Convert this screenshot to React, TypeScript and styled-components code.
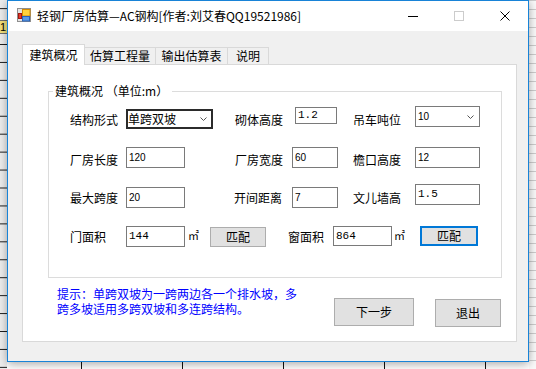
import React from "react";
import styled, { createGlobalStyle } from "styled-components";

const CJK = `"Noto Sans CJK SC", "Liberation Sans", sans-serif`;

const GlobalStyle = createGlobalStyle`
  html, body {
    margin: 0;
    padding: 0;
    background: #ffffff;
    overflow: hidden;
  }
  body {
    font-family: ${CJK};
    font-size: 12px;
    color: #000;
  }
  * {
    box-sizing: border-box;
  }
`;

const tabs = ["建筑概况", "估算工程量", "输出估算表", "说明"];
const tabWidths = [63, 72, 73, 42];

const App = () => {
  return (
    <>
      <GlobalStyle />
      <Page>
        <RowHeaders>
          <ActiveRowHeader>1</ActiveRowHeader>
        </RowHeaders>
        <Window>
          <TitleBar>
            <AppIcon width="14" height="14" viewBox="0 0 14 14">
              <rect x="0.5" y="0.5" width="13" height="13" fill="#e4e4e4" stroke="#8e8e8e" />
              <rect x="1.5" y="5.5" width="3" height="5" fill="#e23b2e" stroke="#a3170f" />
              <rect x="5.5" y="1.5" width="7.5" height="6.5" fill="#ffd23c" stroke="#d48a00" />
              <rect x="5.5" y="8.5" width="7" height="4.5" fill="#5b9be6" stroke="#2a62b8" />
            </AppIcon>
            <Caption>轻钢厂房估算—AC钢构[作者:刘艾春QQ19521986]</Caption>
            <CaptionButton>
              <svg width="10" height="10" viewBox="0 0 10 10">
                <line x1="0" y1="5.5" x2="10" y2="5.5" stroke="#000" />
              </svg>
            </CaptionButton>
            <CaptionButton>
              <svg width="10" height="10" viewBox="0 0 10 10">
                <rect x="0.5" y="0.5" width="9" height="9" fill="none" stroke="#cccccc" />
              </svg>
            </CaptionButton>
            <CaptionButton>
              <svg width="10" height="10" viewBox="0 0 10 10">
                <path d="M0.5 0.5 L9.5 9.5 M9.5 0.5 L0.5 9.5" stroke="#000" strokeWidth="1" />
              </svg>
            </CaptionButton>
          </TitleBar>

          <Body>
            <TabStrip>
              {tabs.map((t, i) => (
                <Tab key={t} $w={tabWidths[i]} $active={i === 0} $first={i === 0}>
                  {t}
                </Tab>
              ))}
            </TabStrip>
            <Panel>
              <GroupBox>
                <Legend>建筑概况 （单位:m）</Legend>
                <FieldGrid>
                  <Label $dy={6}>结构形式</Label>
                  <Combo $w={87} $h={20} $dy={3} $focus>
                    <ComboText>单跨双坡</ComboText>
                    <Chevron />
                  </Combo>
                  <Label $dy={6} $dx={2}>砌体高度</Label>
                  <TextBox $w={42} $h={17} $dy={1} $dx={3} $mono>1.2</TextBox>
                  <Label $dy={6}>吊车吨位</Label>
                  <Combo $w={65} $h={21} $dy={0}>
                    <ComboText $small>10</ComboText>
                    <Chevron />
                  </Combo>

                  <Label $dy={5}>厂房长度</Label>
                  <TextBox $w={59} $h={21}>120</TextBox>
                  <Label $dy={5} $dx={2}>厂房宽度</Label>
                  <TextBox $w={46} $h={21}>60</TextBox>
                  <Label $dy={5}>檐口高度</Label>
                  <TextBox $w={65} $h={21}>12</TextBox>

                  <Label $dy={6}>最大跨度</Label>
                  <TextBox $w={59} $h={21} $dy={3}>20</TextBox>
                  <Label $dy={6} $dx={1}>开间距离</Label>
                  <TextBox $w={46} $h={21} $dy={3}>7</TextBox>
                  <Label $dy={6}>文儿墙高</Label>
                  <TextBox $w={65} $h={21} $mono>1.5</TextBox>
                </FieldGrid>

                <AreaRow>
                  <Label $dy={3} $w={56}>门面积</Label>
                  <TextBox $w={59} $h={21} $mono>144</TextBox>
                  <Unit $ml={3}>㎡</Unit>
                  <Button $w={56} $h={20} $dy={1} $ml={10}>匹配</Button>
                  <Label $dy={3} $w={45} $ml={22}>窗面积</Label>
                  <TextBox $w={59} $h={20} $mono>864</TextBox>
                  <Unit $ml={2}>㎡</Unit>
                  <Button $w={58} $h={20} $ml={14} $focus>匹配</Button>
                </AreaRow>
              </GroupBox>

              <Footer>
                <Hint>
                  <HintLine>提示：单跨双坡为一跨两边各一个排水坡，多</HintLine>
                  <HintLine>跨多坡适用多跨双坡和多连跨结构。</HintLine>
                </Hint>
                <Actions>
                  <Button $w={80} $h={28} $dy={12}>下一步</Button>
                  <Button $w={66} $h={28} $dy={13} $ml={21}>退出</Button>
                </Actions>
              </Footer>
            </Panel>
          </Body>
        </Window>
        <RightSheet />
        <BottomSheet />
      </Page>
    </>
  );
};

const Chevron = () => (
  <svg width="7" height="4" viewBox="0 0 7 4">
    <polyline points="0.5,0.5 3.5,3.5 6.5,0.5" fill="none" stroke="#555" strokeWidth="1" />
  </svg>
);

export default App;

/**
 * page + the spreadsheet peeking out behind the dialog
 */
const Page = styled.div`
  display: grid;
  grid-template-columns: 7px 522px 7px;
  grid-template-rows: 362px 7px;
  width: 536px;
  height: 369px;
`;

const RowHeaders = styled.div`
  grid-column: 1;
  grid-row: 1 / 3;
  background-color: #eeeeee;
  background-image: linear-gradient(to bottom, #1e1e1e 0, #1e1e1e 1px, transparent 1px);
  background-size: 100% 17.95px;
  background-position: 0 44px;
  display: flex;
  flex-direction: column;
`;

const ActiveRowHeader = styled.div`
  margin-top: 20px;
  height: 14px;
  background: #f3e07a;
  border-top: 1px solid #6e6e6e;
  border-bottom: 1px solid #6e6e6e;
  font-family: "Liberation Sans", sans-serif;
  font-size: 11px;
  line-height: 12px;
  text-align: right;
  padding-right: 1px;
  overflow: hidden;
`;

const RightSheet = styled.div`
  grid-column: 3;
  grid-row: 1 / 3;
  background-color: #fafafa;
  background-image: linear-gradient(to bottom, #cdcdcd 0, #cdcdcd 1px, transparent 1px);
  background-size: 100% 9px;
  background-position: 0 9px;
`;

const BottomSheet = styled.div`
  grid-column: 2;
  grid-row: 2;
  background-color: #ffffff;
  background-image: linear-gradient(to right, #111 0, #111 1px, transparent 1px);
  background-size: 101px 100%;
  background-position: 74px 0;
`;

/**
 * the dialog window
 */
const Window = styled.div`
  grid-column: 2;
  grid-row: 1;
  position: relative;
  z-index: 1;
  display: flex;
  flex-direction: column;
  border: 1px solid #1883d7;
  background: #f0f0f0;
  box-shadow: 0 2px 9px rgba(0, 0, 0, 0.35);
`;

const TitleBar = styled.div`
  height: 30px;
  display: flex;
  align-items: center;
  background: #ffffff;
`;

const AppIcon = styled.svg`
  align-self: flex-start;
  margin: 7px 0 0 9px;
  flex-shrink: 0;
`;

const Caption = styled.div`
  flex: 1;
  margin-left: 6px;
  margin-top: -1px;
  font-size: 12px;
  line-height: 16px;
  white-space: nowrap;
`;

const CaptionButton = styled.div`
  width: 46px;
  height: 30px;
  display: flex;
  align-items: center;
  justify-content: center;
`;

const Body = styled.div`
  flex: 1;
  display: flex;
  flex-direction: column;
  padding: 13px 11px 0 14px;
`;

const TabStrip = styled.div`
  display: flex;
  align-items: flex-end;
  height: 20px;
`;

const Tab = styled.div<{ $w: number; $active?: boolean; $first?: boolean }>`
  position: relative;
  z-index: ${(p) => (p.$active ? 2 : 1)};
  width: ${(p) => p.$w}px;
  height: ${(p) => (p.$active ? 21 : 17)}px;
  margin-left: ${(p) => (p.$first ? 0 : -1)}px;
  margin-bottom: ${(p) => (p.$active ? -1 : 0)}px;
  border: 1px solid #d9d9d9;
  border-bottom: none;
  background: ${(p) => (p.$active ? "#ffffff" : "#f0f0f0")};
  display: flex;
  align-items: center;
  justify-content: center;
  font-size: 12px;
  line-height: 16px;
  white-space: nowrap;
`;

const Panel = styled.div`
  width: 495px;
  height: 278px;
  border: 1px solid #d9d9d9;
  background: #ffffff;
  padding: 26px 0 0 25px;
  display: flex;
  flex-direction: column;
`;

const GroupBox = styled.div`
  width: 454px;
  height: 187px;
  border: 1px solid #dcdcdc;
  display: flex;
  flex-direction: column;
`;

const Legend = styled.div`
  align-self: flex-start;
  margin: -9px 0 0 4px;
  padding: 0 4px 0 2px;
  background: #ffffff;
  line-height: 16px;
  white-space: pre;
`;

const FieldGrid = styled.div`
  display: grid;
  grid-template-columns: 56px 107px 59px 61px 62px 65px;
  grid-template-rows: 41px 37px 42px;
  align-items: start;
  margin-top: 7px;
  padding-left: 21px;
`;

const AreaRow = styled.div`
  display: flex;
  align-items: flex-start;
  height: 21px;
  padding-left: 21px;
`;

const Label = styled.span<{ $dy?: number; $dx?: number; $w?: number; $ml?: number }>`
  display: block;
  margin-top: ${(p) => p.$dy ?? 0}px;
  margin-left: ${(p) => p.$ml ?? 0}px;
  padding-left: ${(p) => p.$dx ?? 0}px;
  ${(p) => (p.$w ? `width: ${p.$w}px; flex-shrink: 0;` : "")}
  font-size: 12px;
  line-height: 16px;
  white-space: nowrap;
`;

const Combo = styled.div<{ $w: number; $h: number; $dy?: number; $focus?: boolean }>`
  width: ${(p) => p.$w}px;
  height: ${(p) => p.$h}px;
  margin-top: ${(p) => p.$dy ?? 0}px;
  border: ${(p) => (p.$focus ? "2px solid #2b2b2b" : "1px solid #7a7a7a")};
  background: #ffffff;
  display: flex;
  align-items: center;
  justify-content: space-between;
  padding: ${(p) => (p.$focus ? "0 4px 0 0" : "0 5px 0 2px")};
`;

const ComboText = styled.span<{ $small?: boolean }>`
  font-family: ${(p) => (p.$small ? `"Liberation Sans", sans-serif` : CJK)};
  font-size: ${(p) => (p.$small ? 10 : 12)}px;
  line-height: 16px;
`;

const TextBox = styled.div<{
  $w: number;
  $h: number;
  $dy?: number;
  $dx?: number;
  $mono?: boolean;
}>`
  width: ${(p) => p.$w}px;
  height: ${(p) => p.$h}px;
  flex-shrink: 0;
  margin-top: ${(p) => p.$dy ?? 0}px;
  margin-left: ${(p) => p.$dx ?? 0}px;
  border: 1px solid #7a7a7a;
  background: #ffffff;
  display: flex;
  align-items: center;
  padding: 0 2px;
  font-family: ${(p) =>
    p.$mono ? `"Liberation Mono", monospace` : `"Liberation Sans", sans-serif`};
  font-size: ${(p) => (p.$mono ? 11 : 10)}px;
  line-height: 13px;
`;

const Unit = styled.span<{ $ml: number }>`
  width: 12px;
  flex-shrink: 0;
  margin-left: ${(p) => p.$ml}px;
  margin-top: 1px;
  font-size: 11px;
  line-height: 16px;
`;

const Button = styled.button<{
  $w: number;
  $h: number;
  $dy?: number;
  $ml?: number;
  $focus?: boolean;
}>`
  width: ${(p) => p.$w}px;
  height: ${(p) => p.$h}px;
  flex-shrink: 0;
  margin: ${(p) => p.$dy ?? 0}px 0 0 ${(p) => p.$ml ?? 0}px;
  padding: 0;
  background: #e1e1e1;
  border: ${(p) => (p.$focus ? "2px solid #0078d7" : "1px solid #adadad")};
  border-radius: 0;
  font-family: ${CJK};
  font-size: 12px;
  line-height: 16px;
  color: #000;
  display: flex;
  align-items: center;
  justify-content: center;
`;

const Footer = styled.div`
  display: flex;
  align-items: flex-start;
  margin-top: 8px;
  padding: 0 15px 0 9px;
`;

const Hint = styled.div`
  display: flex;
  flex-direction: column;
  color: #0000ff;
  font-size: 12px;
`;

const HintLine = styled.div`
  height: 15px;
  line-height: 15px;
  white-space: nowrap;
`;

const Actions = styled.div`
  margin-left: auto;
  display: flex;
  align-items: flex-start;
`;
